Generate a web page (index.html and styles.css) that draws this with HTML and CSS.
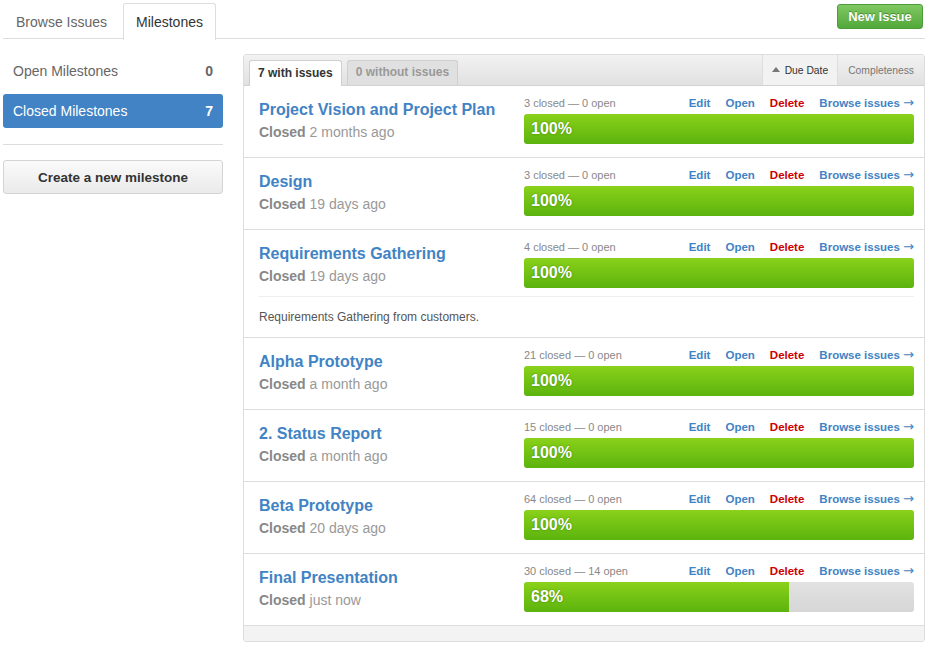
FILE: index.html
```html
<!DOCTYPE html>
<html>
<head>
<meta charset="utf-8">
<link rel="stylesheet" href="styles.css">
</head>
<body>
<div class="page">
  <div class="topbar">
    <div class="tabs">
      <a class="tab first">Browse Issues</a>
      <a class="tab active">Milestones</a>
    </div>
    <a class="btn-new">New Issue</a>
  </div>
  <div class="content">
    <aside class="sidebar">
      <div class="side-item"><span>Open Milestones</span><span class="count">0</span></div>
      <div class="side-item selected"><span>Closed Milestones</span><span class="count">7</span></div>
      <div class="side-sep"></div>
      <button class="btn-create">Create a new milestone</button>
    </aside>
    <section class="panel">
      <div class="panel-head">
        <div class="ptabs">
          <span class="ptab on">7 with issues</span>
          <span class="ptab">0 without issues</span>
        </div>
        <div class="sorts">
          <span class="sort on"><span class="tri"></span>Due Date</span>
          <span class="sort">Completeness</span>
        </div>
      </div>

      <div class="ms">
        <div class="ms-main">
          <div class="ms-left"><a class="ms-title">Project Vision and Project Plan</a><div class="ms-state"><b>Closed</b> 2 months ago</div></div>
          <div class="ms-right">
            <div class="ms-meta"><span class="counts">3 closed — 0 open</span><span class="links"><a>Edit</a><a>Open</a><a class="del">Delete</a><a>Browse issues <span class="arr">→</span></a></span></div>
            <div class="bar"><div class="fill" style="width:100%">100%</div></div>
          </div>
        </div>
      </div>

      <div class="ms">
        <div class="ms-main">
          <div class="ms-left"><a class="ms-title">Design</a><div class="ms-state"><b>Closed</b> 19 days ago</div></div>
          <div class="ms-right">
            <div class="ms-meta"><span class="counts">3 closed — 0 open</span><span class="links"><a>Edit</a><a>Open</a><a class="del">Delete</a><a>Browse issues <span class="arr">→</span></a></span></div>
            <div class="bar"><div class="fill" style="width:100%">100%</div></div>
          </div>
        </div>
      </div>

      <div class="ms">
        <div class="ms-main with-desc">
          <div class="ms-left"><a class="ms-title">Requirements Gathering</a><div class="ms-state"><b>Closed</b> 19 days ago</div></div>
          <div class="ms-right">
            <div class="ms-meta"><span class="counts">4 closed — 0 open</span><span class="links"><a>Edit</a><a>Open</a><a class="del">Delete</a><a>Browse issues <span class="arr">→</span></a></span></div>
            <div class="bar"><div class="fill" style="width:100%">100%</div></div>
          </div>
        </div>
        <div class="ms-desc">Requirements Gathering from customers.</div>
      </div>

      <div class="ms">
        <div class="ms-main">
          <div class="ms-left"><a class="ms-title">Alpha Prototype</a><div class="ms-state"><b>Closed</b> a month ago</div></div>
          <div class="ms-right">
            <div class="ms-meta"><span class="counts">21 closed — 0 open</span><span class="links"><a>Edit</a><a>Open</a><a class="del">Delete</a><a>Browse issues <span class="arr">→</span></a></span></div>
            <div class="bar"><div class="fill" style="width:100%">100%</div></div>
          </div>
        </div>
      </div>

      <div class="ms">
        <div class="ms-main">
          <div class="ms-left"><a class="ms-title">2. Status Report</a><div class="ms-state"><b>Closed</b> a month ago</div></div>
          <div class="ms-right">
            <div class="ms-meta"><span class="counts">15 closed — 0 open</span><span class="links"><a>Edit</a><a>Open</a><a class="del">Delete</a><a>Browse issues <span class="arr">→</span></a></span></div>
            <div class="bar"><div class="fill" style="width:100%">100%</div></div>
          </div>
        </div>
      </div>

      <div class="ms">
        <div class="ms-main">
          <div class="ms-left"><a class="ms-title">Beta Prototype</a><div class="ms-state"><b>Closed</b> 20 days ago</div></div>
          <div class="ms-right">
            <div class="ms-meta"><span class="counts">64 closed — 0 open</span><span class="links"><a>Edit</a><a>Open</a><a class="del">Delete</a><a>Browse issues <span class="arr">→</span></a></span></div>
            <div class="bar"><div class="fill" style="width:100%">100%</div></div>
          </div>
        </div>
      </div>

      <div class="ms">
        <div class="ms-main">
          <div class="ms-left"><a class="ms-title">Final Presentation</a><div class="ms-state"><b>Closed</b> just now</div></div>
          <div class="ms-right">
            <div class="ms-meta"><span class="counts">30 closed — 14 open</span><span class="links"><a>Edit</a><a>Open</a><a class="del">Delete</a><a>Browse issues <span class="arr">→</span></a></span></div>
            <div class="bar"><div class="fill" style="width:68%">68%</div></div>
          </div>
        </div>
      </div>

      <div class="panel-foot"></div>
    </section>
  </div>
</div>
</body>
</html>
```
FILE: styles.css
```css
* { box-sizing: border-box; }
html, body { margin: 0; padding: 0; background: #fff; }
body {
  font-family: "Liberation Sans", Arial, sans-serif;
  color: #333;
  font-size: 14px;
}
a { text-decoration: none; cursor: pointer; }

.page { padding: 0 4px 0 3px; }

.topbar {
  display: flex;
  justify-content: space-between;
  align-items: flex-start;
  border-bottom: 1px solid #ddd;
  height: 39px;
}
.tabs { display: flex; padding-top: 3px; height: 39px; }
.tab {
  display: block;
  height: 36px;
  line-height: 36px;
  padding: 0 12px;
  font-size: 14px;
  color: #666;
  border: 1px solid transparent;
  border-bottom: none;
  border-radius: 3px 3px 0 0;
  margin-right: 3px;
}
.tab.active {
  color: #333;
  background: #fff;
  border-color: #ddd;
  height: 37px;
}
.btn-new {
  margin-top: 4px;
  margin-right: 2px;
  display: block;
  width: 86px;
  height: 25px;
  line-height: 23px;
  text-align: center;
  font-size: 13px;
  font-weight: bold;
  color: #fff;
  text-shadow: 0 -1px 0 rgba(40, 110, 30, 0.55), 0 0 1px rgba(40,110,30,0.4);
  background: linear-gradient(#80c862, #52a83a);
  border: 1px solid #4c9c3c;
  border-radius: 3px;
}

.content {
  display: flex;
  gap: 20px;
  margin-top: 15px;
}

.sidebar { width: 220px; flex: none; display: flex; flex-direction: column; }
.side-item {
  display: flex;
  justify-content: space-between;
  align-items: center;
  height: 34px;
  padding: 0 10px;
  font-size: 14px;
  color: #666;
  margin-bottom: 6px;
  border-radius: 3px;
}
.side-item .count { font-weight: bold; color: #666; }
.side-item.selected { background: #4183c4; color: #fff; margin-bottom: 0; }
.side-item.selected .count { color: #fff; }
.side-sep { height: 1px; background: #ddd; margin: 16px 0 15px; }
.btn-create {
  display: block;
  width: 220px;
  height: 34px;
  font-family: inherit;
  font-size: 13.5px;
  font-weight: bold;
  color: #333;
  background: linear-gradient(#fafafa, #eaeaea);
  border: 1px solid #d4d4d4;
  border-radius: 3px;
  padding: 0;
}

.panel {
  flex: 1;
  border: 1px solid #ddd;
  border-radius: 3px;
  overflow: hidden;
}
.panel-head {
  display: flex;
  justify-content: space-between;
  height: 31px;
  background: linear-gradient(#f2f2f2, #e1e1e1);
  border-bottom: 1px solid #d2d2d2;
}
.ptabs { display: flex; align-items: flex-end; padding-left: 5px; gap: 5px; }
.ptab {
  display: block;
  height: 25px;
  line-height: 23px;
  padding: 0 8px;
  font-size: 12px;
  font-weight: bold;
  color: #999;
  background: #e0e0e0;
  border: 1px solid #cfcfcf;
  border-bottom: none;
  border-radius: 3px 3px 0 0;
}
.ptab.on { background: #fff; color: #333; height: 26px; margin-bottom: -1px; line-height: 24px; }
.sorts { display: flex; }
.sort {
  display: flex;
  align-items: center;
  height: 30px;
  padding: 0 10px;
  font-size: 10.3px;
  color: #777;
}
.sort.on {
  background: #f2f2f2;
  color: #333;
  border-left: 1px solid #ddd;
  border-right: 1px solid #ddd;
  padding: 0 9px 0 9px;
}
.tri {
  display: inline-block;
  width: 0; height: 0;
  border-left: 4px solid transparent;
  border-right: 4px solid transparent;
  border-bottom: 5px solid #777;
  margin-right: 5px;
  margin-top: -1px;
}

.ms { border-bottom: 1px solid #ddd; padding: 0 10px 0 15px; }
.ms-main {
  display: flex;
  padding: 10px 0 13px;
}
.ms-main.with-desc { padding-bottom: 8px; }
.ms-left { flex: 1; padding-top: 4px; }
.ms-title {
  display: block;
  font-size: 16px;
  font-weight: bold;
  color: #4183c4;
  line-height: 20px;
}
.ms-state {
  margin-top: 2px;
  font-size: 14px;
  line-height: 20px;
  color: #999;
}
.ms-state b { color: #888; }
.ms-right { width: 390px; flex: none; }
.ms-meta {
  display: flex;
  justify-content: space-between;
  align-items: baseline;
  font-size: 11px;
  line-height: 14px;
  margin-bottom: 4px;
}
.counts { color: #888; }
.links { display: flex; gap: 15px; font-weight: bold; font-size: 11.5px; align-items: baseline; }
.links a { color: #4183c4; white-space: nowrap; }
.links a.del { color: #c00; }
.arr { font-family: "DejaVu Sans", sans-serif; font-weight: normal; font-size: 13px; line-height: 14px; }
.bar {
  height: 30px;
  border-radius: 3px;
  background: linear-gradient(#e2e2e2, #d6d6d6);
  overflow: hidden;
}
.fill {
  height: 30px;
  line-height: 30px;
  padding-left: 7px;
  font-size: 16px;
  font-weight: bold;
  color: #fff;
  text-shadow: 0 0 2px rgba(40, 90, 0, 0.6);
  background: linear-gradient(#8ad11a, #5cb30e);
}
.ms-desc {
  border-top: 1px solid #eee;
  padding: 13px 0;
  font-size: 12px;
  line-height: 14px;
  color: #555;
}
.panel-foot { height: 15px; background: #f3f3f3; }
```
